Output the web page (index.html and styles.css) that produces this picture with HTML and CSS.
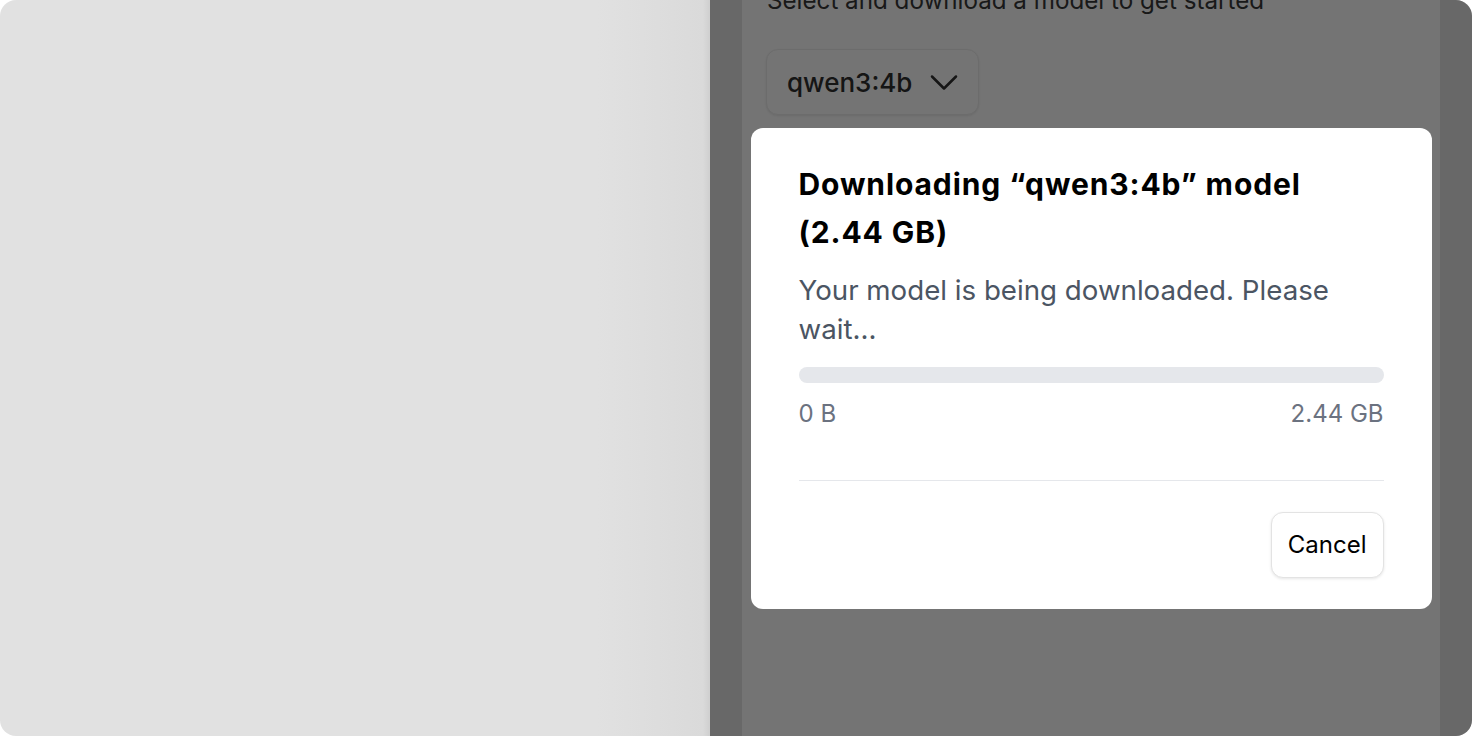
FILE: index.html
```html
<!DOCTYPE html>
<html lang="en">

<head>
    <meta charset="UTF-8">
    <meta name="viewport" content="width=device-width, initial-scale=1.0">
    <title>Download model</title>
    <link rel="stylesheet" href="styles.css">
</head>

<body>
    <div class="screen">
        <aside class="left-panel"></aside>

        <main class="app">
            <div class="rail"></div>
            <section class="content">
                <p class="hint">Select and download a model to get started</p>
                <button class="model-select">
                    <span>qwen3:4b</span>
                    <svg width="28" height="28" viewBox="0 0 28 28" fill="none" stroke="currentColor" stroke-width="2.5" stroke-linecap="round" stroke-linejoin="round">
                        <path d="M2 8.5l12 12 12-12" />
                    </svg>
                </button>
            </section>
            <div class="rail"></div>

            <div class="backdrop">
                <div class="dialog">
                    <h2 class="dialog-title">Downloading “qwen3:4b” model <span class="nowrap">(2.44 GB)</span></h2>
                    <p class="dialog-text">Your model is being downloaded. Please wait...</p>
                    <div class="progress"><div class="progress-fill" style="width: 0%"></div></div>
                    <div class="progress-labels">
                        <span>0 B</span>
                        <span>2.44 GB</span>
                    </div>
                    <div class="dialog-footer">
                        <button class="btn-cancel">Cancel</button>
                    </div>
                </div>
            </div>
        </main>
    </div>
</body>

</html>
```

FILE: styles.css
```css
html,
body {
    margin: 0;
    background: #ffffff;
}

body {
    font-family: 'Inter', 'Noto Sans', sans-serif;
}

.screen {
    display: flex;
    width: 1472px;
    height: 736px;
    border-radius: 16px;
    overflow: hidden;
}

.left-panel {
    width: 710px;
    flex-shrink: 0;
    background: linear-gradient(to right, #e1e1e1 0%, #e1e1e1 84%, #dadada 99%, #cfcfcf 100%);
}

.app {
    position: relative;
    flex: 1;
    display: flex;
}

.rail {
    width: 32px;
    background: #d0d0d0;
}

.content {
    flex: 1;
    background: #e8e8e8;
    padding: 0 24px;
}

.hint {
    margin: -15px 0 0 1px;
    font-size: 24.2px;
    line-height: 32px;
    color: #333;
}

.model-select {
    margin-top: 32px;
    display: flex;
    align-items: center;
    gap: 18px;
    height: 66px;
    padding: 0 20px 0 20px;
    border: 1px solid #d9d9d9;
    border-radius: 12px;
    background: #e8e8e8;
    box-shadow: 0 1px 2px rgba(0, 0, 0, 0.08);
    font-family: inherit;
    font-size: 26px;
    font-weight: 500;
    color: #2a2a2a;
}

.backdrop {
    position: absolute;
    inset: 0;
    background: rgba(0, 0, 0, 0.5);
    display: flex;
    align-items: center;
    justify-content: center;
}

.dialog {
    width: 585px;
    background: #fff;
    border-radius: 12px;
    padding: 32px 48px 31px;
}

.dialog-title {
    margin: 0;
    font-size: 30px;
    font-weight: 700;
    letter-spacing: 0.9px;
    line-height: 48px;
    color: #000;
}

.nowrap {
    white-space: nowrap;
}

.dialog-text {
    margin: 15px 0 0;
    font-size: 27.7px;
    line-height: 39px;
    color: #4b5563;
}

.progress {
    margin-top: 18px;
    height: 16px;
    border-radius: 8px;
    background: #e5e7eb;
    overflow: hidden;
}

.progress-fill {
    height: 100%;
    background: #111;
}

.progress-labels {
    display: flex;
    justify-content: space-between;
    margin-top: 15px;
    font-size: 24px;
    line-height: 32px;
    color: #6b7280;
}

.dialog-footer {
    margin-top: 50px;
    padding-top: 31px;
    border-top: 1px solid #e5e7eb;
    display: flex;
    justify-content: flex-end;
}

.btn-cancel {
    height: 66px;
    padding: 0 16px;
    border: 1px solid #e3e3e3;
    border-radius: 12px;
    background: #fff;
    box-shadow: 0 1px 3px rgba(0, 0, 0, 0.1);
    font-family: inherit;
    font-size: 24px;
    color: #000;
}
```
